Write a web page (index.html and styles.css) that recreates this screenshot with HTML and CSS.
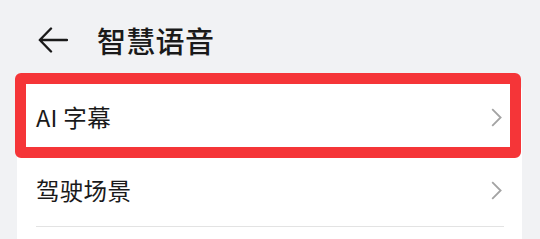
FILE: index.html
```html
<!DOCTYPE html>
<html lang="zh-CN">
<head>
  <meta charset="UTF-8" />
  <meta name="viewport" content="width=device-width, initial-scale=1.0"/>
  <title>智慧语音</title>
  <link rel="stylesheet" href="styles.css">
</head>
<body>
  <div class="header">
    <svg class="back" width="30" height="26" viewBox="0 0 30 26">
      <path d="M29 13H2M13 1.5L1.8 13L13 24.5" fill="none" stroke="#1a1a1a" stroke-width="2.4" stroke-linecap="round" stroke-linejoin="round"/>
    </svg>
    <h1>智慧语音</h1>
  </div>

  <div class="card">
    <div class="row selected">
      <span class="label">AI 字幕</span>
      <svg class="chevron" width="11" height="19" viewBox="0 0 11 19">
        <path d="M1.2 1.2L9.6 9.5L1.2 17.8" fill="none" stroke="#a3a3a3" stroke-width="1.8"/>
      </svg>
      <div class="mark"></div>
    </div>
    <div class="row">
      <span class="label">驾驶场景</span>
      <svg class="chevron" width="11" height="19" viewBox="0 0 11 19">
        <path d="M1.2 1.2L9.6 9.5L1.2 17.8" fill="none" stroke="#a3a3a3" stroke-width="1.8"/>
      </svg>
    </div>
  </div>
</body>
</html>
```

FILE: styles.css
```css
body {
  margin: 0;
  background: #f1f2f4;
  font-family: "Noto Sans CJK SC", "Noto Sans", sans-serif;
  color: #1a1a1a;
  overflow: hidden;
}
.header {
  height: 79px;
  display: flex;
  align-items: center;
  padding-left: 38px;
}
.back {
  display: block;
  margin-top: 1px;
}
.header h1 {
  margin: 0 0 0 29px;
  font-size: 29px;
  font-weight: 500;
  letter-spacing: 0.3px;
}
.card {
  margin-left: 17px;
  width: 505px;
  background: white;
  border-radius: 12px 12px 0 0;
  padding: 2px 0 14px;
}
.row {
  position: relative;
  height: 72px;
  margin: 0 18px 0 19px;
  display: flex;
  align-items: center;
  justify-content: space-between;
  border-bottom: 1px solid #e3e3e3;
}
.row.selected {
  border-bottom-color: transparent;
}
.label {
  font-size: 23.5px;
  letter-spacing: 0.3px;
}
.chevron {
  display: block;
  margin-right: 2px;
}
.mark {
  position: absolute;
  left: -21px;
  right: -17px;
  top: -8px;
  bottom: -5px;
  border: 11px solid #f53538;
  border-radius: 6px;
}
```
